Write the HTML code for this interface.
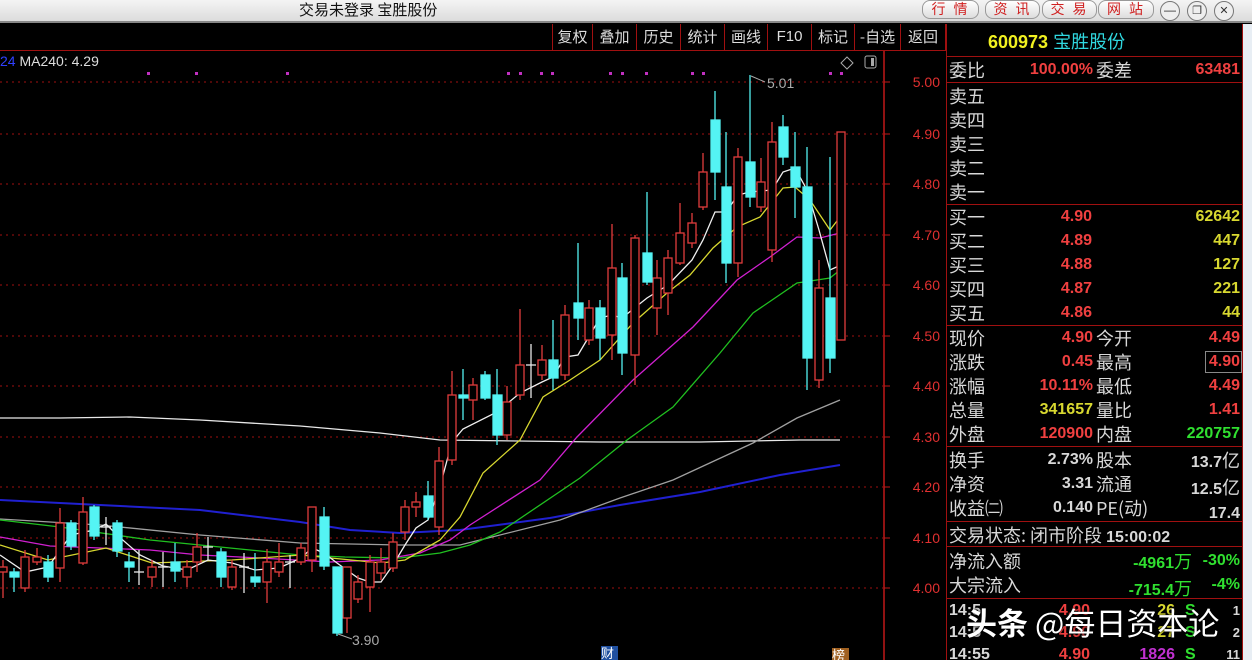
<!DOCTYPE html>
<html style="width:1252px;height:660px;overflow:hidden"><head><meta charset="utf-8">
<style>
*{margin:0;padding:0;box-sizing:border-box}
html,body{width:1252px;height:660px;overflow:hidden}
body{background:#000;position:relative;font-family:"Liberation Sans","Noto Sans CJK SC",sans-serif}
.abs{position:absolute;white-space:nowrap}
#title{left:0;top:0;width:1252px;height:23px;background:linear-gradient(#f4f4f4,#dcdcdc);border-bottom:2px solid #888}
.tb{top:24px;height:26px;color:#ddd;font-size:15px;line-height:26px;text-align:center;border-left:1px solid #a01010}
.cn{font-family:"Noto Sans CJK SC",sans-serif}
.lbl{color:#d8d8d8;font-size:18px;font-family:"Noto Sans CJK SC",sans-serif;line-height:24px}
.num{font-weight:bold;font-size:16px;line-height:24px;text-align:right}
.r{color:#f04040}.y{color:#d8d830}.g{color:#30e030}.w{color:#d8d8d8}
.hl{position:absolute;left:946px;width:297px;height:1px;background:#a01010}
.nbtn{top:0;height:19px;border:1px solid #999;border-radius:8px;background:linear-gradient(#fff,#ddd);color:#d02020;font-size:14px;line-height:17px;text-align:center;letter-spacing:8px;padding-left:6px}
</style></head><body>
<div id="title" class="abs"></div>
<div class="abs cn" style="left:299px;top:0;font-size:15px;line-height:20px;color:#111">交易未登录 宝胜股份</div>
<div class="abs nbtn cn" style="left:922px;width:57px">行情</div>
<div class="abs nbtn cn" style="left:985px;width:55px">资讯</div>
<div class="abs nbtn cn" style="left:1042px;width:55px">交易</div>
<div class="abs nbtn cn" style="left:1098px;width:56px">网站</div>
<div class="abs" style="left:1160px;top:1px;width:20px;height:20px;border:1px solid #777;border-radius:10px;background:#eee;font-size:12px;line-height:16px;text-align:center;color:#333">—</div>
<div class="abs" style="left:1187px;top:1px;width:20px;height:20px;border:1px solid #777;border-radius:10px;background:#eee;font-size:11px;line-height:18px;text-align:center;color:#333">❐</div>
<div class="abs" style="left:1214px;top:1px;width:20px;height:20px;border:1px solid #777;border-radius:10px;background:#eee;font-size:11px;line-height:18px;text-align:center;color:#333">✕</div>
<div class="abs" style="left:0;top:50px;width:946px;height:1px;background:#a01010"></div>
<div class="abs tb cn" style="left:552px;width:40px">复权</div>
<div class="abs tb cn" style="left:592px;width:44px">叠加</div>
<div class="abs tb cn" style="left:636px;width:44px">历史</div>
<div class="abs tb cn" style="left:680px;width:44px">统计</div>
<div class="abs tb cn" style="left:724px;width:43px">画线</div>
<div class="abs tb" style="left:767px;width:44px">F10</div>
<div class="abs tb cn" style="left:811px;width:43px">标记</div>
<div class="abs tb cn" style="left:854px;width:46px">-自选</div>
<div class="abs tb cn" style="left:900px;width:46px;border-right:1px solid #a01010">返回</div>
<div class="abs" style="left:0;top:52px;font-size:14px;color:#ddd;line-height:18px"><span style="color:#3040ff">24</span> MA240: 4.29</div>
<svg class="abs" style="left:0;top:0" width="946" height="660">
<g stroke="#a01010" stroke-dasharray="2,4" stroke-width="1">
<line x1="0" y1="82" x2="883" y2="82"/><line x1="0" y1="134" x2="883" y2="134"/><line x1="0" y1="184" x2="883" y2="184"/><line x1="0" y1="235" x2="883" y2="235"/><line x1="0" y1="285" x2="883" y2="285"/><line x1="0" y1="336" x2="883" y2="336"/><line x1="0" y1="386" x2="883" y2="386"/><line x1="0" y1="437" x2="883" y2="437"/><line x1="0" y1="487" x2="883" y2="487"/><line x1="0" y1="538" x2="883" y2="538"/><line x1="0" y1="588" x2="883" y2="588"/>
</g>
<line x1="884" y1="51" x2="884" y2="660" stroke="#c01818" stroke-width="1.5"/>
<g stroke="#c01818"><line x1="884" y1="82" x2="890" y2="82"/><line x1="884" y1="134" x2="890" y2="134"/><line x1="884" y1="184" x2="890" y2="184"/><line x1="884" y1="235" x2="890" y2="235"/><line x1="884" y1="285" x2="890" y2="285"/><line x1="884" y1="336" x2="890" y2="336"/><line x1="884" y1="386" x2="890" y2="386"/><line x1="884" y1="437" x2="890" y2="437"/><line x1="884" y1="487" x2="890" y2="487"/><line x1="884" y1="538" x2="890" y2="538"/><line x1="884" y1="588" x2="890" y2="588"/></g>
<g fill="#e03030" font-size="14" font-family="Liberation Sans" text-anchor="end">
<text x="940" y="87">5.00</text><text x="940" y="139">4.90</text><text x="940" y="189">4.80</text><text x="940" y="240">4.70</text><text x="940" y="290">4.60</text><text x="940" y="341">4.50</text><text x="940" y="391">4.40</text><text x="940" y="442">4.30</text><text x="940" y="492">4.20</text><text x="940" y="543">4.10</text><text x="940" y="593">4.00</text>
</g>
<g fill="#c030c0"><rect x="147" y="72" width="3" height="3"/><rect x="195" y="72" width="3" height="3"/><rect x="286" y="72" width="3" height="3"/><rect x="507" y="72" width="3" height="3"/><rect x="519" y="72" width="3" height="3"/><rect x="540" y="72" width="3" height="3"/><rect x="551" y="72" width="3" height="3"/><rect x="609" y="72" width="3" height="3"/><rect x="621" y="72" width="3" height="3"/><rect x="645" y="72" width="3" height="3"/><rect x="691" y="72" width="3" height="3"/><rect x="702" y="72" width="3" height="3"/><rect x="829" y="72" width="3" height="3"/><rect x="840" y="72" width="3" height="3"/></g>
<path d="M847 57 L853 63 L847 69 L841 63Z" fill="none" stroke="#aaa"/>
<rect x="865" y="56" width="11" height="12" rx="2" fill="none" stroke="#aaa"/><rect x="871" y="58" width="3" height="8" fill="#aaa"/>
<g fill="none" stroke-width="1.3">
<polyline stroke="#e8e8e8" points="0,418 60,418 130,417 200,420 300,426 380,433 440,440 600,442 700,442 800,440 840,440"/>
<polyline stroke="#2020d0" stroke-width="2" points="0,500 100,505 200,510 300,522 350,530 400,533 460,530 550,518 620,505 700,492 780,475 840,465"/>
<polyline stroke="#a0a0a0" points="0,519 100,525 200,535 300,543 400,545 460,545 560,520 620,498 673,480 753,443 797,418 840,400"/>
<polyline stroke="#20c020" points="0,520 60,527 150,540 220,547 300,555 345,557 400,558 440,553 470,545 500,532 580,478 627,440 673,407 720,353 753,313 797,283 830,278 840,270"/>
<polyline stroke="#d020d0" points="0,537 50,546 100,548 150,550 200,555 260,558 330,562 380,560 420,553 450,540 470,525 540,480 577,437 633,380 693,327 737,280 770,257 797,237 820,238 840,233"/>
<polyline stroke="#d8d830" points="0,545 48,560 106,548 152,563 232,560 301,555 381,563 405,560 440,540 460,517 483,473 520,440 543,397 570,380 600,360 633,323 667,293 690,275 713,248 737,227 760,217 783,188 795,187 810,200 830,230 840,217"/>
<polyline stroke="#f0f0f0" points="0,555 25,572 48,567 71,535 94,530 106,524 117,535 140,555 163,566 187,570 208,560 232,563 255,570 279,568 301,558 312,548 324,553 337,563 358,578 370,582 381,582 393,565 405,545 416,528 428,520 439,490 452,442 463,429 497,412 520,393 542,382 553,377 565,357 578,355 600,318 612,315 622,318 647,298 668,285 692,260 703,240 715,212 726,212 738,195 750,192 772,190 783,172 795,168 807,190 819,230 830,270 841,265"/>
</g>
<g stroke="#e03c3c" stroke-width="1.3" fill="#000">
<line x1="3" y1="560" x2="3" y2="598"/><rect x="-1" y="567" width="8" height="5"/>
<line x1="25" y1="550" x2="25" y2="592"/><rect x="21" y="557" width="8" height="31"/>
<line x1="37" y1="548" x2="37" y2="565"/><rect x="33" y="557" width="8" height="5"/>
<line x1="60" y1="508" x2="60" y2="582"/><rect x="56" y="523" width="8" height="45"/>
<line x1="83" y1="497" x2="83" y2="565"/><rect x="79" y="512" width="8" height="51"/>
<line x1="152" y1="560" x2="152" y2="587"/><rect x="148" y="567" width="8" height="10"/>
<line x1="187" y1="560" x2="187" y2="587"/><rect x="183" y="567" width="8" height="10"/>
<line x1="197" y1="533" x2="197" y2="572"/><rect x="193" y="547" width="8" height="15"/>
<line x1="232" y1="560" x2="232" y2="590"/><rect x="228" y="567" width="8" height="20"/>
<line x1="267" y1="549" x2="267" y2="603"/><rect x="263" y="562" width="8" height="20"/>
<line x1="279" y1="543" x2="279" y2="577"/><rect x="275" y="562" width="8" height="10"/>
<line x1="301" y1="543" x2="301" y2="565"/><rect x="297" y="548" width="8" height="14"/>
<line x1="312" y1="507" x2="312" y2="572"/><rect x="308" y="507" width="8" height="53"/>
<line x1="347" y1="567" x2="347" y2="633"/><rect x="343" y="567" width="8" height="51"/>
<line x1="358" y1="575" x2="358" y2="603"/><rect x="354" y="582" width="8" height="17"/>
<line x1="370" y1="555" x2="370" y2="612"/><rect x="366" y="562" width="8" height="25"/>
<line x1="381" y1="548" x2="381" y2="580"/><rect x="377" y="562" width="8" height="11"/>
<line x1="393" y1="533" x2="393" y2="572"/><rect x="389" y="542" width="8" height="26"/>
<line x1="405" y1="500" x2="405" y2="540"/><rect x="401" y="507" width="8" height="25"/>
<line x1="416" y1="492" x2="416" y2="517"/><rect x="412" y="502" width="8" height="5"/>
<line x1="439" y1="447" x2="439" y2="535"/><rect x="435" y="461" width="8" height="66"/>
<line x1="452" y1="371" x2="452" y2="465"/><rect x="448" y="395" width="8" height="65"/>
<line x1="473" y1="378" x2="473" y2="420"/><rect x="469" y="385" width="8" height="15"/>
<line x1="507" y1="386" x2="507" y2="440"/><rect x="503" y="402" width="8" height="33"/>
<line x1="520" y1="309" x2="520" y2="400"/><rect x="516" y="365" width="8" height="30"/>
<line x1="542" y1="345" x2="542" y2="380"/><rect x="538" y="360" width="8" height="15"/>
<line x1="565" y1="305" x2="565" y2="380"/><rect x="561" y="315" width="8" height="60"/>
<line x1="589" y1="300" x2="589" y2="345"/><rect x="585" y="308" width="8" height="32"/>
<line x1="612" y1="224" x2="612" y2="360"/><rect x="608" y="268" width="8" height="67"/>
<line x1="635" y1="235" x2="635" y2="385"/><rect x="631" y="238" width="8" height="117"/>
<line x1="657" y1="260" x2="657" y2="335"/><rect x="653" y="278" width="8" height="30"/>
<line x1="668" y1="250" x2="668" y2="315"/><rect x="664" y="258" width="8" height="35"/>
<line x1="680" y1="203" x2="680" y2="265"/><rect x="676" y="233" width="8" height="30"/>
<line x1="692" y1="213" x2="692" y2="248"/><rect x="688" y="223" width="8" height="20"/>
<line x1="703" y1="153" x2="703" y2="210"/><rect x="699" y="172" width="8" height="35"/>
<line x1="738" y1="148" x2="738" y2="277"/><rect x="734" y="157" width="8" height="106"/>
<line x1="761" y1="158" x2="761" y2="212"/><rect x="757" y="182" width="8" height="25"/>
<line x1="772" y1="122" x2="772" y2="262"/><rect x="768" y="142" width="8" height="108"/>
<line x1="819" y1="260" x2="819" y2="388"/><rect x="815" y="288" width="8" height="92"/>
<rect x="837" y="132" width="8" height="208"/>
</g>
<g stroke="#54f0f0" stroke-width="1.3" fill="#54f4f4">
<line x1="14" y1="568" x2="14" y2="592"/><rect x="10" y="572" width="9" height="5"/>
<line x1="48" y1="555" x2="48" y2="582"/><rect x="44" y="562" width="9" height="15"/>
<line x1="71" y1="520" x2="71" y2="550"/><rect x="67" y="523" width="9" height="23"/>
<line x1="94" y1="505" x2="94" y2="540"/><rect x="90" y="507" width="9" height="29"/>
<line x1="117" y1="520" x2="117" y2="557"/><rect x="113" y="523" width="9" height="28"/>
<line x1="129" y1="552" x2="129" y2="582"/><rect x="125" y="562" width="9" height="5"/>
<line x1="175" y1="543" x2="175" y2="582"/><rect x="171" y="562" width="9" height="9"/>
<line x1="221" y1="548" x2="221" y2="587"/><rect x="217" y="552" width="9" height="25"/>
<line x1="255" y1="553" x2="255" y2="587"/><rect x="251" y="577" width="9" height="5"/>
<line x1="324" y1="507" x2="324" y2="570"/><rect x="320" y="517" width="9" height="49"/>
<line x1="337" y1="567" x2="337" y2="636"/><rect x="333" y="567" width="9" height="66"/>
<line x1="428" y1="481" x2="428" y2="520"/><rect x="424" y="496" width="9" height="21"/>
<line x1="463" y1="369" x2="463" y2="420"/><rect x="459" y="395" width="9" height="3"/>
<line x1="485" y1="371" x2="485" y2="400"/><rect x="481" y="375" width="9" height="23"/>
<line x1="497" y1="369" x2="497" y2="445"/><rect x="493" y="395" width="9" height="40"/>
<line x1="553" y1="320" x2="553" y2="390"/><rect x="549" y="360" width="9" height="18"/>
<line x1="578" y1="243" x2="578" y2="340"/><rect x="574" y="303" width="9" height="15"/>
<line x1="600" y1="300" x2="600" y2="360"/><rect x="596" y="308" width="9" height="30"/>
<line x1="622" y1="263" x2="622" y2="375"/><rect x="618" y="278" width="9" height="75"/>
<line x1="647" y1="192" x2="647" y2="285"/><rect x="643" y="253" width="9" height="29"/>
<line x1="715" y1="91" x2="715" y2="200"/><rect x="711" y="120" width="9" height="52"/>
<line x1="726" y1="132" x2="726" y2="283"/><rect x="722" y="187" width="9" height="76"/>
<line x1="750" y1="75" x2="750" y2="207"/><rect x="746" y="162" width="9" height="35"/>
<line x1="783" y1="115" x2="783" y2="165"/><rect x="779" y="127" width="9" height="30"/>
<line x1="795" y1="132" x2="795" y2="218"/><rect x="791" y="167" width="9" height="20"/>
<line x1="807" y1="147" x2="807" y2="390"/><rect x="803" y="187" width="9" height="171"/>
<line x1="830" y1="157" x2="830" y2="373"/><rect x="826" y="298" width="9" height="60"/>
</g>
<g stroke="#e8e8e8" stroke-width="1.3">
<line x1="106" y1="517" x2="106" y2="545"/><line x1="101" y1="527" x2="111" y2="527"/>
<line x1="139" y1="550" x2="139" y2="585"/><line x1="134" y1="572" x2="144" y2="572"/>
<line x1="163" y1="552" x2="163" y2="587"/><line x1="158" y1="567" x2="168" y2="567"/>
<line x1="208" y1="537" x2="208" y2="560"/><line x1="203" y1="547" x2="213" y2="547"/>
<line x1="244" y1="553" x2="244" y2="593"/><line x1="239" y1="567" x2="249" y2="567"/>
<line x1="290" y1="555" x2="290" y2="588"/><line x1="285" y1="562" x2="295" y2="562"/>
<line x1="531" y1="344" x2="531" y2="398"/><line x1="526" y1="365" x2="536" y2="365"/>
</g>
<g stroke="#aaa" fill="none"><path d="M338 634 L352 639"/><path d="M751 76 L765 82"/></g>
<text x="352" y="645" fill="#aaa" font-size="14" font-family="Liberation Sans">3.90</text>
<text x="767" y="88" fill="#aaa" font-size="14" font-family="Liberation Sans">5.01</text>
</svg>
<div class="abs cn" style="left:601px;top:646px;width:17px;height:14px;background:#2050a0;color:#fff;font-size:13px;line-height:14px;overflow:hidden">财</div>
<div class="abs cn" style="left:832px;top:648px;width:17px;height:12px;background:#a06020;color:#fff;font-size:13px;line-height:14px;overflow:hidden">榜</div>
<div class="abs" style="left:946px;top:24px;width:1px;height:636px;background:#a01010"></div>
<div class="abs" style="left:1242px;top:24px;width:1px;height:636px;background:#a01010"></div>
<div class="abs" style="left:1243px;top:24px;width:9px;height:636px;background:#e8eef4"></div>
<div class="abs" style="left:988px;top:28px;font-size:18px;line-height:26px"><span style="color:#f0f020;font-weight:bold">600973</span> <span class="cn" style="color:#30d8e0">宝胜股份</span></div>
<div class="hl" style="top:56px"></div>
<div class="hl" style="top:82px"></div>
<div class="hl" style="top:204px"></div>
<div class="hl" style="top:325px"></div>
<div class="hl" style="top:446px"></div>
<div class="hl" style="top:521px"></div>
<div class="hl" style="top:546px"></div>
<div class="hl" style="top:598px"></div>
<div class="abs lbl" style="left:949px;top:58px">委比</div>
<div class="abs num r" style="left:1000px;top:58px;width:93px">100.00%</div>
<div class="abs lbl" style="left:1096px;top:58px">委差</div>
<div class="abs num r" style="left:1150px;top:58px;width:90px">63481</div>
<div class="abs lbl" style="left:949px;top:84px;line-height:24px">卖五<br>卖四<br>卖三<br>卖二<br>卖一</div>
<div class="abs lbl" style="left:949px;top:205px;line-height:24px">买一<br>买二<br>买三<br>买四<br>买五</div>
<div class="abs num r" style="left:1000px;top:205px;width:92px">4.90<br>4.89<br>4.88<br>4.87<br>4.86</div>
<div class="abs num y" style="left:1150px;top:205px;width:90px">62642<br>447<br>127<br>221<br>44</div>
<div class="abs lbl" style="left:949px;top:326px">现价<br>涨跌<br>涨幅<br>总量<br>外盘</div>
<div class="abs num" style="left:1000px;top:326px;width:93px"><span class="r">4.90</span><br><span class="r">0.45</span><br><span class="r">10.11%</span><br><span class="y">341657</span><br><span class="r">120900</span></div>
<div class="abs lbl" style="left:1096px;top:326px">今开<br>最高<br>最低<br>量比<br>内盘</div>
<div class="abs num" style="left:1150px;top:326px;width:90px"><span class="r">4.49</span><br><span class="r">4.90</span><br><span class="r">4.49</span><br><span class="r">1.41</span><br><span class="g">220757</span></div>
<div class="abs" style="left:1205px;top:351px;width:37px;height:22px;border:1px solid #888"></div>
<div class="abs lbl" style="left:949px;top:448px">换手<br>净资<br>收益㈡</div>
<div class="abs num w" style="left:1000px;top:448px;width:93px">2.73%<br>3.31<br>0.140</div>
<div class="abs lbl" style="left:1096px;top:448px">股本<br>流通<br>PE(动)</div>
<div class="abs num w" style="left:1150px;top:448px;width:90px">13.7<span class="cn" style="font-weight:normal;font-size:18px">亿</span><br>12.5<span class="cn" style="font-weight:normal;font-size:18px">亿</span><br>17.4</div>
<div class="abs lbl" style="left:949px;top:523px">交易状态: 闭市阶段 <b style="font-family:'Liberation Sans';font-size:16px">15:00:02</b></div>
<div class="abs lbl" style="left:949px;top:549px">净流入额<br>大宗流入</div>
<div class="abs num g" style="left:1090px;top:549px;width:102px">-4961<span class="cn" style="font-weight:normal;font-size:18px">万</span><br>-715.4<span class="cn" style="font-weight:normal;font-size:18px">万</span></div>
<div class="abs num g" style="left:1195px;top:549px;width:45px">-30%<br>-4%</div>
<div class="abs" style="left:947px;top:599px;width:295px;height:61px;overflow:hidden">
<div class="abs num w" style="left:2px;top:1px;line-height:22px;text-align:left">14:5<br>14:5<br>14:55</div>
<div class="abs num" style="left:93px;top:1px;width:50px;line-height:22px"><span class="r">4.90</span><br><span class="r">4.90</span><br><span class="r">4.90</span></div>
<div class="abs num" style="left:183px;top:1px;width:45px;line-height:22px"><span class="y">26</span><br><span class="y">27</span><br><span style="color:#c030d0">1826</span></div>
<div class="abs num g" style="left:238px;top:1px;line-height:22px;text-align:left">S<br>S<br>S</div>
<div class="abs num w" style="left:275px;top:1px;width:18px;line-height:22px;font-size:13px">1<br>2<br>11</div>
<div class="abs cn" style="left:19px;top:1px;font-size:31px;line-height:44px;color:#fff;font-weight:bold;text-shadow:0 0 3px #000">头条 <span style="font-weight:normal">@每日资本论</span></div>
</div>
</body></html>
